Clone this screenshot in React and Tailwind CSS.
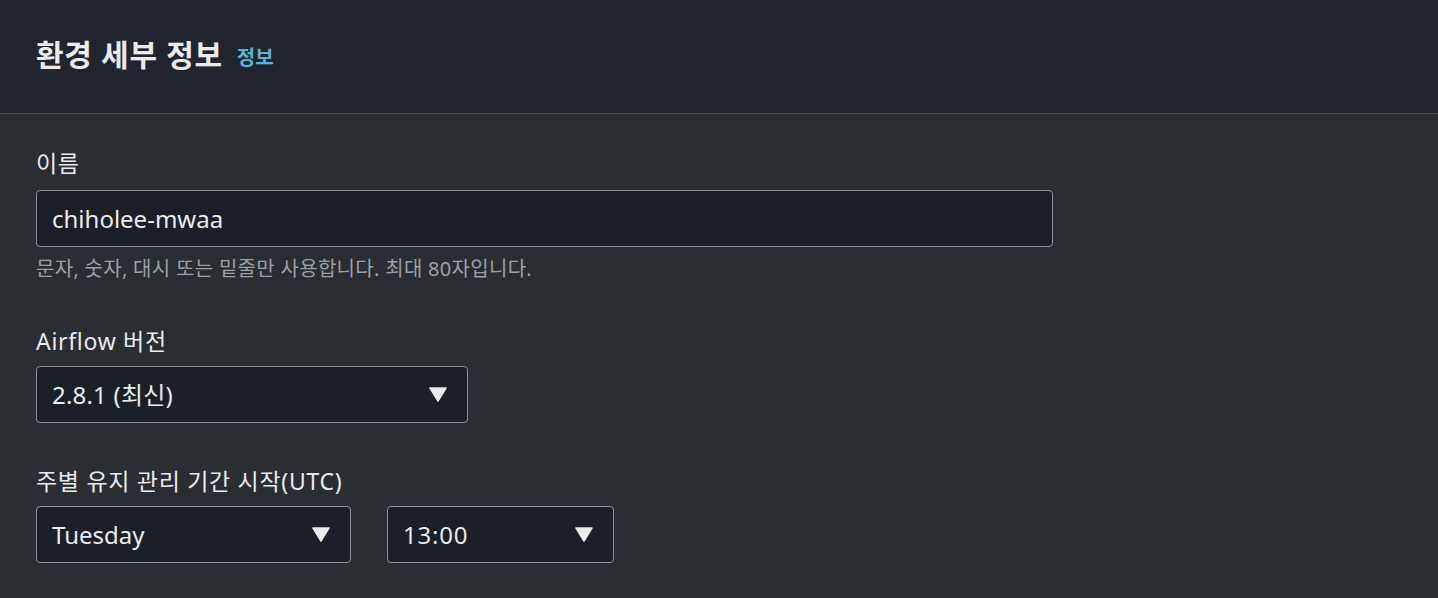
export default function App() {
  const font = { fontFamily: '"Noto Sans", "Noto Sans CJK KR", sans-serif' };
  const Tri = () => (
    <svg width="18" height="15" viewBox="0 0 18 15" className="shrink-0">
      <path d="M1 1 H17 L9 14 Z" fill="#e9ebed" stroke="#e9ebed" strokeWidth="1.5" strokeLinejoin="round" />
    </svg>
  );
  return (
    <div className="w-[1438px] h-[598px] bg-[#2a2d32] text-[#e9ebed] overflow-hidden" style={font}>
      <div className="h-[114px] bg-[#22252d] border-b border-[#434850] flex items-center px-[36px] pb-[3px]">
        <h2 className="text-[30px] font-bold leading-none tracking-[0.7px]">환경 세부 정보</h2>
        <span className="ml-[14px] text-[20px] font-bold text-[#5fb3d9] mt-[6px]">정보</span>
      </div>
      <div className="px-[36px] pt-[33px]">
        <div className="text-[23px] leading-[32px] tracking-[0.7px]">이름</div>
        <div className="mt-[11px] w-[1017px] h-[57px] bg-[#1b1f27] border border-[#8b9197] rounded-[4px] flex items-center px-[15px] text-[24px]">
          chiholee-mwaa
        </div>
        <div className="mt-[8px] text-[20px] text-[#9aa0a6] leading-[28px] tracking-[0.3px]">문자, 숫자, 대시 또는 밑줄만 사용합니다. 최대 80자입니다.</div>

        <div className="mt-[42px] text-[23px] leading-[32px] tracking-[0.7px]">Airflow 버전</div>
        <div className="mt-[9px] w-[432px] h-[57px] bg-[#1b1f27] border border-[#8b9197] rounded-[4px] flex items-center justify-between pl-[15px] pr-[20px] text-[24px] tracking-[0.2px]">
          <span>2.8.1 (최신)</span>
          <Tri />
        </div>

        <div className="mt-[42px] text-[23px] leading-[32px] tracking-[0.7px]">주별 유지 관리 기간 시작(UTC)</div>
        <div className="mt-[9px] flex gap-[36px]">
          <div className="w-[315px] h-[57px] bg-[#1b1f27] border border-[#8b9197] rounded-[4px] flex items-center justify-between pl-[15px] pr-[20px] text-[24px]">
            <span>Tuesday</span>
            <Tri />
          </div>
          <div className="w-[227px] h-[57px] bg-[#1b1f27] border border-[#8b9197] rounded-[4px] flex items-center justify-between pl-[15px] pr-[20px] text-[24px]">
            <span className="tracking-[0.8px]">13:00</span>
            <Tri />
          </div>
        </div>
      </div>
    </div>
  );
}
